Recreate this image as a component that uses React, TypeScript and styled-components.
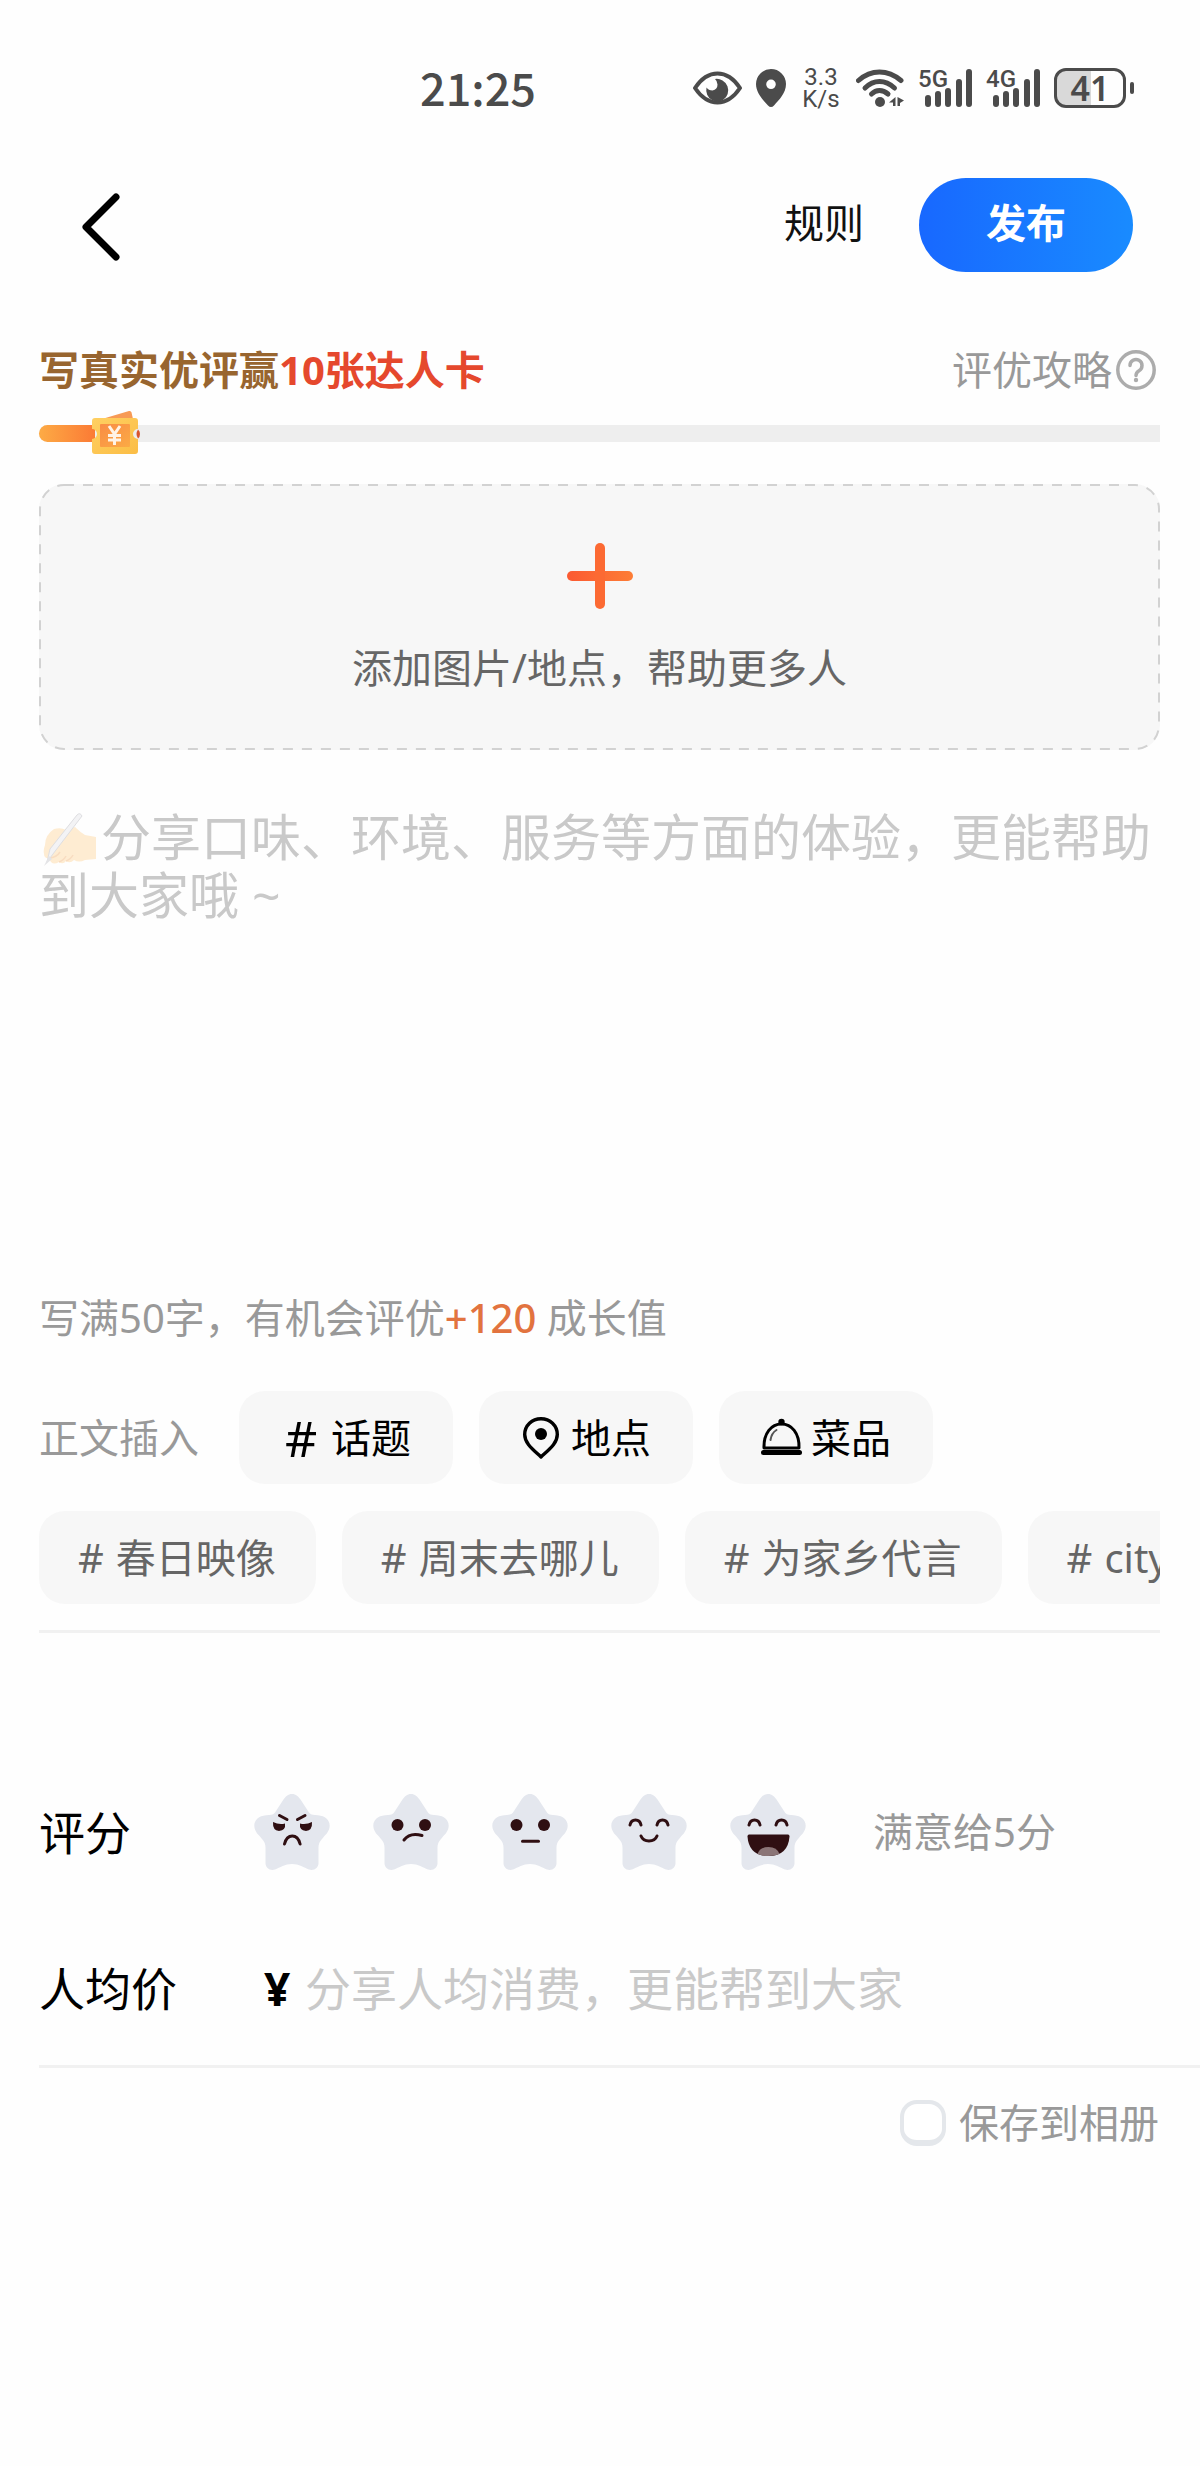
import React from 'react';
import styled, { createGlobalStyle } from 'styled-components';

const GlobalStyle = createGlobalStyle`
  *, *::before, *::after { box-sizing: border-box; }
  body {
    margin: 0;
    background: #fefefe;
    color: #000;
    font-family: "Noto Sans", "Noto Sans CJK SC", sans-serif;
    font-size: 40px;
    line-height: 56px;
  }
  button, input, textarea {
    font: inherit;
    color: inherit;
    margin: 0;
    padding: 0;
    border: 0;
    background: none;
  }
  button { cursor: pointer; }
  svg { display: block; flex: none; }
`;

const Page = styled.div`
  padding-bottom: 64px;
`;

/* ---------- status bar ---------- */

const StatusBar = styled.div`
  display: flex;
  align-items: center;
  justify-content: space-between;
  height: 40px;
  margin-top: 68px;
  padding: 0 66px 0 35%;
  color: #4b4b4b;
`;

const Clock = styled.time`
  padding-bottom: 2px;
  font-family: "Noto Sans CJK SC", sans-serif;
  font-size: 45px;
  font-weight: 500;
`;

const StatusIcons = styled.div`
  display: flex;
  align-items: center;
  gap: 14px;
`;

const Speed = styled.div`
  display: flex;
  flex-direction: column;
  width: 42px;
  text-align: center;
  font-family: Roboto, sans-serif;
  font-size: 24px;
  line-height: 22px;
`;

const SignalBox = styled.div`
  position: relative;
`;

const SignalLabel = styled.span`
  position: absolute;
  top: 0;
  left: 0;
  font-family: Roboto, sans-serif;
  font-size: 24px;
  font-weight: 500;
  line-height: 20px;
`;

const Battery = styled.div`
  display: flex;
  align-items: center;
  gap: 4px;

  &::after {
    content: "";
    width: 4px;
    height: 12px;
    border-radius: 2px;
    background: #4b4b4b;
  }
`;

const BatteryBody = styled.span`
  display: flex;
  align-items: center;
  justify-content: center;
  width: 72px;
  height: 40px;
  border: 3px solid #4b4b4b;
  border-radius: 12px;
  background: linear-gradient(90deg, #d9d9d9 52%, transparent 52%);
  font-size: 34px;
  font-weight: 600;
  line-height: 34px;
`;

/* ---------- header ---------- */

const Header = styled.header`
  display: flex;
  align-items: center;
  justify-content: space-between;
  margin-top: 70px;
  padding: 0 67px 0 82px;
`;

const BackButton = styled.button`
  padding-top: 4px;
`;

const HeaderActions = styled.div`
  display: flex;
  align-items: center;
  gap: 55px;
`;

const TextButton = styled.button`
  padding-bottom: 4px;
  color: #111;
`;

const PublishButton = styled.button`
  height: 94px;
  padding: 0 67px 4px;
  border-radius: 47px;
  background: linear-gradient(90deg, #1868ff, #198bff);
  color: #fff;
  font-weight: 700;
`;

/* ---------- shared ---------- */

const Content = styled.main`
  padding-left: 39px;
`;

const Inset = styled.div`
  padding-right: 40px;
`;

const Divider = styled.hr`
  height: 3px;
  margin: 0;
  border: 0;
  background: #f1f1f1;
`;

/* ---------- reward progress ---------- */

const RewardRow = styled.div`
  display: flex;
  align-items: center;
  justify-content: space-between;
  margin-top: 70px;
`;

const RewardTitle = styled.h1`
  margin: 0;
  color: #98652f;
  font-size: 40px;
  font-weight: 700;
  line-height: 56px;

  em {
    color: #e5482d;
    font-style: normal;
  }
`;

const GuideLink = styled.a`
  display: flex;
  align-items: center;
  gap: 4px;
  padding-right: 4px;
  color: #999;
  text-decoration: none;
`;

const Track = styled.div`
  height: 17px;
  margin-top: 27px;
  border-radius: 9px 0 0 9px;
  background: #eee;
`;

const Fill = styled.div`
  position: relative;
  width: 5%;
  height: 100%;
  border-radius: 9px 0 0 9px;
  background: linear-gradient(90deg, #fdab45, #fb7a35);
`;

const TicketBadge = styled.span`
  position: absolute;
  top: -15px;
  right: -45px;
`;

/* ---------- upload ---------- */

const UploadButton = styled.button`
  position: relative;
  display: flex;
  flex-direction: column;
  align-items: center;
  gap: 31px;
  width: 100%;
  margin-top: 42px;
  padding: 59px 0 54px;
  border-radius: 25px;
  background: #f7f7f7;
  color: #666;
`;

const DashedOutline = styled.svg`
  position: absolute;
  inset: 0;
  width: 100%;
  height: 100%;

  rect {
    width: calc(100% - 2px);
    height: calc(100% - 2px);
  }
`;

/* ---------- review text ---------- */

const ReviewField = styled.div`
  position: relative;
  margin-top: 58px;
`;

const WritingHand = styled.svg`
  position: absolute;
  top: 5px;
  left: 3px;
`;

const ReviewInput = styled.textarea`
  display: block;
  width: 100%;
  height: 482px;
  font-size: 50px;
  line-height: 58px;
  text-indent: 62px;
  resize: none;
  outline: none;

  &::placeholder {
    color: #c9c9c9;
    opacity: 1;
  }
`;

const Hint = styled.p`
  margin: 0;
  color: #999;

  strong {
    color: #e2733f;
    font-weight: 500;
  }
`;

/* ---------- insert tools and topics ---------- */

const InsertRow = styled.div`
  display: flex;
  align-items: center;
  gap: 26px;
  margin-top: 45px;
`;

const InsertLabel = styled.span`
  width: 174px;
  color: #999;
`;

const InsertButton = styled.button`
  display: flex;
  align-items: center;
  justify-content: center;
  gap: 8px;
  width: 214px;
  height: 93px;
  border-radius: 26px;
  background: #f7f7f7;
`;

const HashMark = styled.span`
  width: 42px;
  padding-left: 4px;
  font-size: 50px;
  text-align: left;
`;

const TopicRow = styled.div`
  display: flex;
  gap: 26px;
  margin: 27px 0 26px;
  overflow: hidden;
`;

const TopicChip = styled.button`
  display: flex;
  flex: none;
  align-items: center;
  gap: 12px;
  height: 93px;
  padding: 0 40px 0 39px;
  border-radius: 26px;
  background: #f7f7f7;
  color: #666;
`;

/* ---------- rating and price ---------- */

const FormRow = styled.div<{ $top: number }>`
  display: flex;
  align-items: center;
  height: 76px;
  margin-top: ${(p) => p.$top}px;
`;

const FieldName = styled.label`
  width: 215px;
  font-size: 46px;
`;

const Stars = styled.div`
  display: flex;
  gap: 43px;
  margin-right: 67px;
`;

const StarOption = styled.label`
  position: relative;
  cursor: pointer;

  input {
    position: absolute;
    inset: 0;
    width: 100%;
    height: 100%;
    opacity: 0;
  }
`;

const RatingNote = styled.span`
  color: #999;
`;

const PriceName = styled(FieldName)`
  width: 225px;
`;

const Currency = styled.span`
  width: 41px;
  font-size: 46px;
  font-weight: 700;
`;

const PriceInput = styled.input`
  flex: 1;
  min-width: 0;
  height: 64px;
  font-size: 46px;
  outline: none;

  &::placeholder {
    color: #c9c9c9;
    opacity: 1;
  }
`;

const SaveSection = styled.section`
  margin-top: 39px;
`;

const SaveRow = styled.div`
  display: flex;
  align-items: center;
  justify-content: flex-end;
  gap: 13px;
  margin-top: 27px;
  padding-right: 41px;
  color: #999;
`;

const SaveBox = styled.input`
  appearance: none;
  width: 46px;
  height: 46px;
  border: 4px solid #e4e7eb;
  border-bottom-width: 6px;
  border-radius: 17px;
  background: #fff;

  &:checked { background: #1868ff; }
`;

/* ---------- drawings ---------- */

const EyeIcon = () => (
  <svg width="49" height="34" viewBox="0 0 49 34">
    <path d="M2 17C8 8 16 2.500 24.500 2.500S41 8 47 17C41 26 33 31.500 24.500 31.500S8 26 2 17Z" fill="none" stroke="#4b4b4b" strokeWidth="4" strokeLinejoin="round" />
    <path d="M22 8a11.500 11.500 0 0 1 8 21q-5 3-11 0a11.500 11.500 0 0 1-5.500-12.500q2 3 6 3 5-1 5-6-.5-4-2.500-5.500Z" fill="#4b4b4b" />
  </svg>
);

const StatusPinIcon = () => (
  <svg width="30" height="38" viewBox="0 0 30 38">
    <path fillRule="evenodd" d="M15 0a15 15 0 0 1 15 15c0 9-7 16-12 21.500q-3 3-6 0C7 31 0 24 0 15A15 15 0 0 1 15 0Zm0 10.500a4.800 4.800 0 1 0 0 9.600 4.800 4.800 0 0 0 0-9.600Z" fill="#4b4b4b" />
  </svg>
);

const WifiIcon = () => (
  <svg width="48" height="38" viewBox="0 0 48 38">
    <g fill="none" stroke="#4b4b4b" strokeWidth="5" strokeLinecap="round">
      <path d="M2.500 11.500Q12 3 23.500 3T45 11.500" />
      <path d="M9 19Q15.500 12.500 23.500 12.500T38.500 19" />
      <path d="M15.500 25Q19 21.500 23.500 21.500T32 25" />
    </g>
    <circle cx="24" cy="33" r="5" fill="#4b4b4b" />
    <path d="M39.500 28v9h-2.500v-3.500h-4zM41.500 28l6.500 3.500-4 2.500v3h-2.500z" fill="#4b4b4b" />
  </svg>
);

const Signal = ({ label }: { label: string }) => (
  <SignalBox>
    <SignalLabel>{label}</SignalLabel>
    <svg width="54" height="38" viewBox="0 0 54 38">
      <g stroke="#4b4b4b" strokeWidth="6" strokeLinecap="round">
        <path d="M10 29v6M20 25v10M30 22v13M41 13v22M51 3v32" />
      </g>
    </svg>
  </SignalBox>
);

const BackIcon = () => (
  <svg width="38" height="68" viewBox="0 0 38 68">
    <path d="M34 4 4 34 34 64" fill="none" stroke="#000" strokeWidth="7" strokeLinecap="round" strokeLinejoin="round" />
  </svg>
);

const HelpIcon = () => (
  <svg width="40" height="40" viewBox="0 0 40 40" fill="none" stroke="#acacac" strokeWidth="3.500">
    <circle cx="20" cy="20" r="18.200" />
    <path d="M14 15.500a6 6 0 1 1 9 5.200q-3 1.700-3 4.800" strokeLinecap="round" />
    <circle cx="20" cy="30" r="2.200" fill="#acacac" stroke="none" />
  </svg>
);

const TicketIcon = () => (
  <svg width="48" height="45" viewBox="0 0 48 45">
    <defs>
      <linearGradient id="ticketEdge" x1="0" y1="0" x2="1" y2="1">
        <stop offset="0" stopColor="#ffd062" />
        <stop offset="1" stopColor="#fbbd45" />
      </linearGradient>
      <linearGradient id="ticketCore" x1="0" y1="0" x2="1" y2="1">
        <stop offset="0" stopColor="#f98c45" />
        <stop offset="1" stopColor="#fbaa45" />
      </linearGradient>
    </defs>
    <path d="M10 9 37 1q2-.5 2.500 1.500L41 9Z" fill="#f79a55" />
    <path d="M46 19.500q2 1.500 2 4.500t-2 4.500q-3-4.500 0-9Z" fill="#d9552e" />
    <path d="M3 8h40q3 0 3 3v8a5 5 0 0 0 0 10v12q0 3-3 3H3q-3 0-3-3V29a5 5 0 0 0 0-10v-8q0-3 3-3Z" fill="url(#ticketEdge)" />
    <rect x="8" y="14" width="30" height="23" rx="1" fill="url(#ticketCore)" />
    <path d="m17 16 5.500 8 5.500-8M22.500 24v11M16 25.500h13M16 30h13" fill="none" stroke="#fff3e6" strokeWidth="3" />
  </svg>
);

const PlusIcon = () => (
  <svg width="66" height="66" viewBox="0 0 66 66">
    <defs>
      <linearGradient id="plusTone" x1="0" y1="0" x2="1" y2="0">
        <stop offset="0" stopColor="#fb5a32" />
        <stop offset="1" stopColor="#fd7d36" />
      </linearGradient>
    </defs>
    <rect x="0" y="28" width="66" height="10" rx="5" fill="url(#plusTone)" />
    <rect x="28" y="0" width="10" height="66" rx="5" fill="#fc6a33" />
  </svg>
);

const PlaceIcon = () => (
  <svg width="42" height="42" viewBox="0 0 42 42">
    <path d="M20 1.700C11 1.700 3.700 8.500 3.700 17.500 3.700 26.500 12 32.500 20 40 28 32.500 36.300 26.500 36.300 17.500 36.300 8.500 29 1.700 20 1.700Z" fill="none" stroke="#000" strokeWidth="3.400" strokeLinejoin="round" />
    <circle cx="20" cy="17" r="6" fill="#000" />
  </svg>
);

const DishIcon = () => (
  <svg width="42" height="42" viewBox="0 0 42 42">
    <circle cx="20.500" cy="5" r="3.200" fill="#000" />
    <path d="M3 31C2.500 16 10.500 7 20.500 7S38.500 16 38 31Z" fill="none" stroke="#000" strokeWidth="3" strokeLinejoin="round" />
    <path d="M9.500 23q1-7 6-10" fill="none" stroke="#555" strokeWidth="2" strokeLinecap="round" />
    <rect x="0" y="33" width="41" height="5" rx="2.500" fill="#000" />
  </svg>
);

const HandDrawing = () => (
  <WritingHand width="56" height="54" viewBox="0 0 56 54" aria-hidden="true">
    <path d="M12 16Q19 14 24 17L33 14Q38 19 43 22L54 24V46L43 47Q37 50 32 47 28 51 24 48 21 52 17 49 12 52 9 49 7 47 8 45 2 46 2 41 1 38 3 32 3 22 12 16Z" fill="#feecd2" />
    <path d="M8 45Q15 44 18 39M17 49Q22 47 24 43M24 48Q29 46 31 42" fill="none" stroke="#f8dcc0" strokeWidth="1.500" />
    <path d="M35 2Q38-1 40 3L14 37 5 49 8 36Z" fill="#f3f3f5" stroke="#dedee1" strokeWidth="1" />
    <path d="M7 43 2 53 10 46Z" fill="#e4e4e6" />
  </WritingHand>
);

const INK = '#2f0f12';

const line = { fill: 'none', stroke: INK, strokeWidth: 3, strokeLinecap: 'round' as const, strokeLinejoin: 'round' as const };

const RoundEyes = () => (
  <>
    <ellipse cx="24.500" cy="31" rx="6" ry="6" fill={INK} />
    <ellipse cx="52" cy="31" rx="6" ry="6" fill={INK} />
  </>
);

const HappyEyes = () => (
  <path d="M19 31q1-5 5.500-5t5.500 5M46 31q1-5 5.500-5t5.500 5" {...line} />
);

const faces: { label: string; art: React.ReactNode }[] = [
  {
    label: '1分',
    art: (
      <>
        <path d="m25.500 21.500 7.500 4M51 21.500l-7.500 4M30.500 50q2-8 7.800-8t7.800 8" {...line} />
        <path d="M19 28q6 3 12 1.500 1 7-6 7.500-6.500-.5-6-9ZM58 28q-6 3-12 1.500-1 7 6 7.500 6.500-.5 6-9Z" fill={INK} />
      </>
    ),
  },
  {
    label: '2分',
    art: (
      <>
        <RoundEyes />
        <path d="M31 46q6-8 18-4.500" {...line} />
      </>
    ),
  },
  {
    label: '3分',
    art: (
      <>
        <RoundEyes />
        <path d="M30.500 47.300h16" {...line} />
      </>
    ),
  },
  {
    label: '4分',
    art: (
      <>
        <HappyEyes />
        <path d="M30 42q2 5 8 5t8-5" {...line} />
      </>
    ),
  },
  {
    label: '5分',
    art: (
      <>
        <HappyEyes />
        <path d="M19 40.500h39q1.500 0 1.500 2Q58 62 38.500 62T17.500 42.500q0-2 1.500-2Z" fill={INK} />
        <path d="M27.500 60Q30 53 38.500 53T49.500 60Q45 62 38.500 62T27.500 60Z" fill="#8b7577" />
      </>
    ),
  },
];

const StarFace = ({ children }: { children: React.ReactNode }) => (
  <svg width="76" height="76" viewBox="0 0 76 76">
    <path
      d="M38 0C42 0 44.500 2.500 46.500 5.500L54 17C55.500 20 58 21 61 21L64 21.300C71 22 75.700 26 75.700 31.500 75.700 36 73 39.500 70 42.500L68 45C65.500 47.500 64.500 50 64.500 54V69C64.500 74 60 77 55 75.500 50 73.500 45 70 38 70S26 73.500 21 75.500C16 77 11.500 74 11.500 69V54C11.500 50 10.500 47.500 8 45L6 42.500C3 39.500.3 36 .3 31.500.3 26 5 22 12 21.300L15 21C18 21 20.500 20 22 17L29.500 5.500C31.500 2.500 34 0 38 0Z"
      fill="#e4e7ee"
    />
    {children}
  </svg>
);

const topics = ['春日映像', '周末去哪儿', '为家乡代言', 'city'];

export default function App() {
  return (
    <Page>
      <GlobalStyle />
      <StatusBar>
        <Clock>21:25</Clock>
        <StatusIcons>
          <EyeIcon />
          <StatusPinIcon />
          <Speed>
            <span>3.3</span>
            <span>K/s</span>
          </Speed>
          <WifiIcon />
          <Signal label="5G" />
          <Signal label="4G" />
          <Battery>
            <BatteryBody>41</BatteryBody>
          </Battery>
        </StatusIcons>
      </StatusBar>

      <Header>
        <BackButton type="button" aria-label="返回">
          <BackIcon />
        </BackButton>
        <HeaderActions>
          <TextButton type="button">规则</TextButton>
          <PublishButton type="button">发布</PublishButton>
        </HeaderActions>
      </Header>

      <Content>
        <Inset>
          <RewardRow>
            <RewardTitle>
              写真实优评赢<em>10张达人卡</em>
            </RewardTitle>
            <GuideLink href="#guide">
              评优攻略
              <HelpIcon />
            </GuideLink>
          </RewardRow>
          <Track role="progressbar" aria-valuenow={5} aria-valuemin={0} aria-valuemax={100}>
            <Fill>
              <TicketBadge>
                <TicketIcon />
              </TicketBadge>
            </Fill>
          </Track>

          <UploadButton type="button">
            <DashedOutline aria-hidden="true">
              <rect x="1" y="1" rx="24" fill="none" stroke="#d2d2d2" strokeWidth="2" strokeDasharray="10 9" />
            </DashedOutline>
            <PlusIcon />
            <span>添加图片/地点，帮助更多人</span>
          </UploadButton>

          <ReviewField>
            <HandDrawing />
            <ReviewInput
              aria-label="评价内容"
              placeholder="分享口味、环境、服务等方面的体验，更能帮助到大家哦 ~"
            />
          </ReviewField>

          <Hint>
            写满50字，有机会评优<strong>+120</strong> 成长值
          </Hint>

          <InsertRow>
            <InsertLabel>正文插入</InsertLabel>
            <InsertButton type="button">
              <HashMark>#</HashMark>
              话题
            </InsertButton>
            <InsertButton type="button">
              <PlaceIcon />
              地点
            </InsertButton>
            <InsertButton type="button">
              <DishIcon />
              菜品
            </InsertButton>
          </InsertRow>

          <TopicRow>
            {topics.map((topic) => (
              <TopicChip type="button" key={topic}>
                <span>#</span>
                <span>{topic}</span>
              </TopicChip>
            ))}
          </TopicRow>
          <Divider />

          <FormRow $top={161} role="radiogroup" aria-labelledby="rating-name">
            <FieldName as="span" id="rating-name">
              评分
            </FieldName>
            <Stars>
              {faces.map((face) => (
                <StarOption key={face.label}>
                  <input type="radio" name="rating" aria-label={face.label} />
                  <StarFace>{face.art}</StarFace>
                </StarOption>
              ))}
            </Stars>
            <RatingNote>满意给5分</RatingNote>
          </FormRow>

          <FormRow $top={80}>
            <PriceName htmlFor="price">人均价</PriceName>
            <Currency>¥</Currency>
            <PriceInput id="price" type="text" inputMode="decimal" placeholder="分享人均消费，更能帮到大家" />
          </FormRow>
        </Inset>

        <SaveSection>
          <Divider />
          <SaveRow>
            <SaveBox type="checkbox" id="save" />
            <label htmlFor="save">保存到相册</label>
          </SaveRow>
        </SaveSection>
      </Content>
    </Page>
  );
}
